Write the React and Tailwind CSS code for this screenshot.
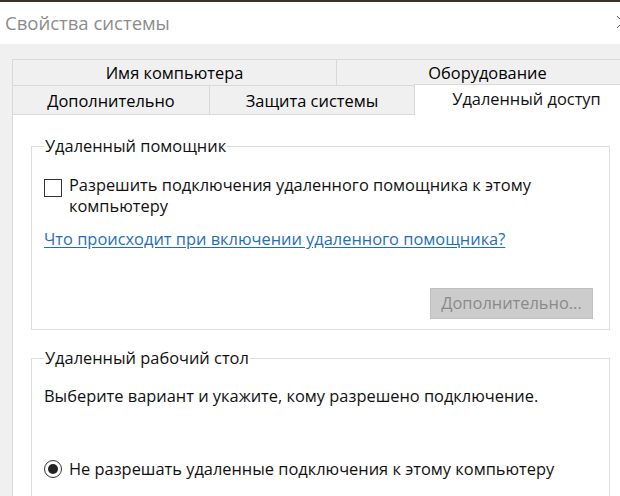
import React from "react";

const Tab = ({ label, className }) => (
  <div
    className={`flex items-center justify-center border border-[#d9d9d9] bg-[#f0f0f0] text-black ${className}`}
  >
    {label}
  </div>
);

const App = () => {
  return (
    <div
      className="relative w-[620px] h-[496px] overflow-hidden bg-[#f0f0f0] text-[16.4px] text-[#111]"
      style={{ fontFamily: '"Open Sans", "Noto Sans", sans-serif' }}
    >
      <div className="h-[2px] bg-[#3b342c]"></div>
      <div className="h-[42px] bg-white flex items-center justify-between pl-[5px]">
        <div className="text-[18.5px] text-[#8c8c8c] -mt-[1px]">Свойства системы</div>
        <svg width="14" height="14" viewBox="0 0 14 14" className="-mr-[10px] -mt-[2px]">
          <path d="M1 1 L13 13 M1 13 L13 1" stroke="#555" strokeWidth="1" />
        </svg>
      </div>

      <div className="pt-[15px] pl-[12px]">
        <div className="flex h-[28px]">
          <Tab label="Имя компьютера" className="w-[325px]" />
          <Tab label="Оборудование" className="flex-1 -ml-px border-r-0 pl-[18px]" />
        </div>
        <div className="flex h-[29px] items-end -mt-px">
          <Tab label="Дополнительно" className="w-[198px] h-[30px] pt-[3px]" />
          <Tab label="Защита системы" className="w-[206px] h-[30px] -ml-px pt-[3px]" />
          <div className="flex-1 h-[31px] -ml-px bg-white border-t border-l border-[#d9d9d9] flex items-start justify-center pt-[2px] pl-[18px]">
            Удаленный доступ
          </div>
        </div>

        <div className="bg-white border-l border-[#d9d9d9] h-[400px] pt-[21px] pl-[18px] pr-[10px]">
          <fieldset className="border border-[#dcdcdc] px-[12px] pb-[10px]">
            <legend className="px-[1px] leading-[20px]">Удаленный помощник</legend>
            <div className="flex items-start gap-[7px] mt-[18px] leading-[21px]">
              <div className="w-[18px] h-[18px] border border-[#333] mt-[5px] shrink-0 bg-white"></div>
              <div>
                Разрешить подключения удаленного помощника к этому
                <br />
                компьютеру
              </div>
            </div>
            <div className="mt-[12px] leading-[21px] text-[#1f6fb8] underline underline-offset-2">
              Что происходит при включении удаленного помощника?
            </div>
            <div className="flex justify-end mt-[39px] pr-[4px]">
              <div className="w-[163px] h-[31px] bg-[#cccccc] border border-[#c0c0c0] text-[#8a8a8a] flex items-center justify-center">
                Дополнительно...
              </div>
            </div>
          </fieldset>

          <fieldset className="border border-[#dcdcdc] px-[12px] mt-[18px] h-[200px]">
            <legend className="px-[1px] leading-[20px]">Удаленный рабочий стол</legend>
            <div className="mt-[17px] leading-[21px]">
              Выберите вариант и укажите, кому разрешено подключение.
            </div>
            <div className="flex items-center gap-[7px] mt-[52px] leading-[21px]">
              <div className="w-[18px] h-[18px] rounded-full border border-[#333] flex items-center justify-center shrink-0">
                <div className="w-[10px] h-[10px] rounded-full bg-[#222]"></div>
              </div>
              <div>Не разрешать удаленные подключения к этому компьютеру</div>
            </div>
          </fieldset>
        </div>
      </div>
    </div>
  );
};

export default App;
